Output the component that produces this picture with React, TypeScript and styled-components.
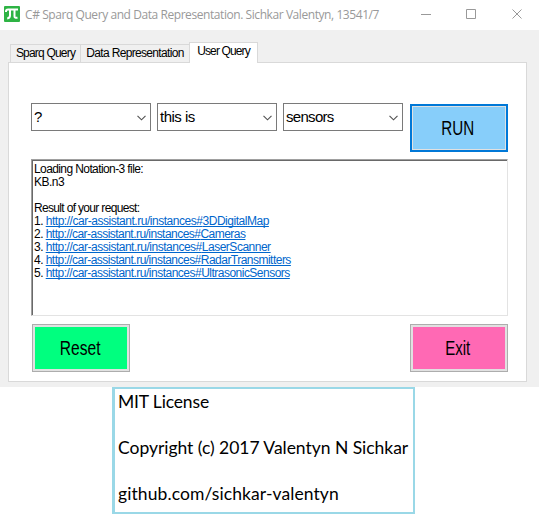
import React from "react";
import styled, { createGlobalStyle } from "styled-components";

const GlobalStyle = createGlobalStyle`
  * { box-sizing: border-box; }
  body { margin: 0; background: #fff; color: #000; font-family: "Liberation Sans", Arial, sans-serif; }
`;

const Page = styled.div`
  width: 539px;
  height: 514px;
  overflow: hidden;
  background: #fff;
`;

const TitleBar = styled.header`
  height: 30px;
  display: flex;
  align-items: center;
  padding: 0 9px 2px 4px;
  background: #fff;
`;

const Title = styled.h1<{ $spacing: number }>`
  flex: 1;
  margin: 0 0 0 5px;
  padding-top: 2px;
  color: #999;
  font: 400 12px/18px "Open Sans", "Noto Sans", sans-serif;
  letter-spacing: ${(p) => p.$spacing}px;
  white-space: nowrap;
`;

const AppIcon = styled.svg`
  width: 16px;
  height: 16px;
  flex: none;
`;

const WindowControls = styled.svg`
  width: 102px;
  height: 10px;
  flex: none;
  margin-right: 7px;
  fill: none;
  stroke: #999;
`;

const Client = styled.main`
  height: 357px;
  padding: 12px 12px 5px 8px;
  background: #f0f0f0;
  display: flex;
  flex-direction: column;
`;

const TabStrip = styled.nav`
  height: 21px;
  display: flex;
  align-items: flex-end;
  padding-left: 2px;
  z-index: 1;
`;

const Tab = styled.button<{ $active?: boolean; $width: number; $spacing: number }>`
  width: ${(p) => p.$width}px;
  height: ${(p) => (p.$active ? 21 : 18)}px;
  margin-bottom: ${(p) => (p.$active ? 0 : 1)}px;
  padding: ${(p) => (p.$active ? "0 0 3px" : "0")};
  border: 1px solid #d9d9d9;
  border-bottom: 0;
  border-right-width: ${(p) => (p.$active ? 1 : 0)}px;
  background: ${(p) => (p.$active ? "#fff" : "#f0f0f0")};
  color: #000;
  font: 12px/17px "Liberation Sans", Arial, sans-serif;
  letter-spacing: ${(p) => p.$spacing}px;
  white-space: nowrap;
`;

const TabPage = styled.section`
  height: 320px;
  margin-top: -1px;
  padding: 40px 18px 9px 22px;
  border: 1px solid #d9d9d9;
  background: #fff;
`;

const QueryRow = styled.div`
  height: 56px;
  display: flex;
  align-items: flex-start;
  gap: 6px;
`;

const Combo = styled.div<{ $spacing: number }>`
  width: 120px;
  height: 28px;
  display: flex;
  align-items: center;
  justify-content: space-between;
  padding: 0 4px 0 2px;
  border: 1px solid #7a7a7a;
  font-size: 15px;
  line-height: 26px;
  letter-spacing: ${(p) => p.$spacing}px;
`;

const Chevron = styled.svg`
  width: 9px;
  height: 6px;
  margin-top: 2px;
  fill: none;
  stroke: #505050;
  stroke-width: 1.1;
`;

const ActionButton = styled.button<{ $fill: string; $focused?: boolean }>`
  width: 98px;
  height: 48px;
  padding: 0 2px 0 0;
  border: ${(p) => (p.$focused ? "2px solid #0078d7" : "1px solid #adadad")};
  box-shadow: inset 0 0 0 ${(p) => (p.$focused ? 1 : 2)}px #e1e1e1;
  background: ${(p) => p.$fill};
  color: #000;
  font: 20px/24px "Liberation Sans", Arial, sans-serif;
`;

const RunSlot = styled.div`
  padding: 1px 0 0 1px;
`;

const ButtonLabel = styled.span<{ $scale: number }>`
  display: inline-block;
  transform: scaleX(${(p) => p.$scale});
`;

const Output = styled.div`
  width: 477px;
  height: 157px;
  padding: 3px 1px 2px;
  border: 1px solid;
  border-color: #a0a0a0 #e3e3e3 #e3e3e3 #a0a0a0;
  box-shadow: inset 1px 1px 0 #696969;
  font-size: 12px;
  line-height: 13px;
`;

const Line = styled.div<{ $spacing: number }>`
  height: 13px;
  padding-left: 1px;
  letter-spacing: ${(p) => p.$spacing}px;
  white-space: pre;
`;

const ResultLink = styled.a<{ $spacing: number }>`
  color: #0066cc;
  letter-spacing: ${(p) => p.$spacing}px;
  text-decoration: underline;
  text-decoration-thickness: 1px;
  text-underline-offset: 1px;
  text-decoration-skip-ink: none;
`;

const FooterRow = styled.div`
  display: flex;
  justify-content: space-between;
  padding: 8px 0 0 1px;
`;

const License = styled.footer`
  width: 303px;
  height: 127px;
  margin-left: 112px;
  padding: 1px 0 0 3px;
  border: 2px solid #9ad8e7;
  border-left-width: 3px;
  background: #fff;
  font: 17.5px/23px Lato, "Open Sans", sans-serif;
`;

const LicenseLine = styled.p<{ $spacing: number }>`
  margin: 0 0 23px;
  letter-spacing: ${(p) => p.$spacing}px;
  white-space: nowrap;
`;

const choices = [
  { value: "?", spacing: 0 },
  { value: "this is", spacing: -0.5 },
  { value: "sensors", spacing: -0.7 },
];

const results = [
  { name: "3DDigitalMap", spacing: -0.47 },
  { name: "Cameras", spacing: -0.53 },
  { name: "LaserScanner", spacing: -0.49 },
  { name: "RadarTransmitters", spacing: -0.52 },
  { name: "UltrasonicSensors", spacing: -0.51 },
];

export default function App() {
  return (
    <Page>
      <GlobalStyle />
      <TitleBar>
        <AppIcon viewBox="0 0 16 16">
          <rect width="16" height="16" rx="1" fill="#2eb344" />
          <path d="M2 6V5Q2.2 3.6 4 3.6H14M6 4V9.5Q6 12 3.2 12.4M10.5 4V10.5Q10.5 12.2 13.5 11.7" fill="none" stroke="#fff" strokeWidth="2" />
        </AppIcon>
        <Title $spacing={-0.43}>C# Sparq Query and Data Representation. Sichkar Valentyn, 13541/7</Title>
        <WindowControls viewBox="0 0 102 10">
          <path d="M0 5.5H10M45.5 .5H54.5V9.5H45.5ZM91.5 .5L100.5 9.5M100.5 .5L91.5 9.5" />
        </WindowControls>
      </TitleBar>
      <Client>
        <TabStrip>
          <Tab $width={70} $spacing={-0.8}>Sparq Query</Tab>
          <Tab $width={109} $spacing={-0.67}>Data Representation</Tab>
          <Tab $width={69} $spacing={-0.88} $active>User Query</Tab>
        </TabStrip>
        <TabPage>
          <QueryRow>
            {choices.map((c) => (
              <Combo key={c.value} $spacing={c.spacing}>
                {c.value}
                <Chevron viewBox="0 0 9 6"><path d="M.5 .8L4.5 4.8L8.5 .8" /></Chevron>
              </Combo>
            ))}
            <RunSlot>
              <ActionButton $fill="#87cefa" $focused><ButtonLabel $scale={0.76}>RUN</ButtonLabel></ActionButton>
            </RunSlot>
          </QueryRow>
          <Output>
            <Line $spacing={-0.6}>Loading Notation-3 file:</Line>
            <Line $spacing={-0.5}>KB.n3</Line>
            <Line $spacing={0}> </Line>
            <Line $spacing={-0.67}>Result of your request:</Line>
            {results.map((r, i) => (
              <Line key={r.name} $spacing={-0.55}>
                {i + 1}. <ResultLink $spacing={r.spacing}>http://car-assistant.ru/instances#{r.name}</ResultLink>
              </Line>
            ))}
          </Output>
          <FooterRow>
            <ActionButton $fill="#00ff7f"><ButtonLabel $scale={0.78}>Reset</ButtonLabel></ActionButton>
            <ActionButton $fill="#ff69b4"><ButtonLabel $scale={0.75}>Exit</ButtonLabel></ActionButton>
          </FooterRow>
        </TabPage>
      </Client>
      <License>
        <LicenseLine $spacing={-0.15}>MIT License</LicenseLine>
        <LicenseLine $spacing={-0.03}>Copyright (c) 2017 Valentyn N Sichkar</LicenseLine>
        <LicenseLine $spacing={0.09}>github.com/sichkar-valentyn</LicenseLine>
      </License>
    </Page>
  );
}
